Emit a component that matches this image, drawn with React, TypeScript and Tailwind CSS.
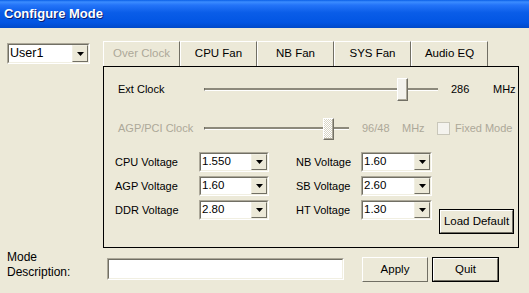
import { FC } from "react";

const font = "font-['Liberation_Sans',Arial,sans-serif]";

const Arrow: FC = () => (
  <div className="w-[16px] h-full flex items-center justify-center bg-[#ECE9D8] border-t border-l border-t-[#F1EFE2] border-l-[#F1EFE2] border-r border-b border-r-[#716F64] border-b-[#716F64]">
    <svg width="7" height="4" viewBox="0 0 7 4">
      <path d="M0 0h7L3.5 4z" fill="#000" />
    </svg>
  </div>
);

const Combo: FC<{ value: string; className: string; text?: string }> = ({ value, className, text = "text-[11.5px]" }) => (
  <div className={`${className} flex border border-t-[#ACA899] border-l-[#ACA899] border-r-white border-b-white`}>
    <div className="flex-1 flex border border-t-[#716F64] border-l-[#716F64] border-r-[#F1EFE2] border-b-[#F1EFE2] bg-white">
      <span className={`flex-1 pl-[1px] flex items-center ${text} text-black`}>{value}</span>
      <Arrow />
    </div>
  </div>
);

const Thumb: FC<{ className: string; disabled?: boolean }> = ({ className, disabled }) => (
  <div
    className={`absolute top-0 ${className} border border-t-white border-l-white border-r-[#716F64] border-b-[#716F64] ${
      disabled
        ? "bg-[repeating-conic-gradient(#ffffff_0_25%,#d8d5c6_0_50%)] bg-[length:2px_2px]"
        : "bg-[#F3F2EC]"
    }`}
  >
    <div className="w-full h-full border-r border-b border-r-[#ACA899] border-b-[#ACA899]" />
  </div>
);

const Track: FC<{ className: string; children: React.ReactNode }> = ({ className, children }) => (
  <div className={`relative ${className} flex items-center`}>
    <div className="w-full h-[3px] bg-[#8C897B] border-b border-white border-l border-l-[#6E6C62]" />
    {children}
  </div>
);

const Btn: FC<{ label: string; className: string; isDefault?: boolean }> = ({ label, className, isDefault }) => (
  <div className={`${className} flex ${isDefault ? "border border-black" : ""}`}>
    <div className="flex-1 flex items-center justify-center border border-t-white border-l-white border-r-[#716F64] border-b-[#716F64] bg-[#ECE9D8] text-[11.5px] text-black">
      {label}
    </div>
  </div>
);

const Tab: FC<{ label: string; disabled?: boolean }> = ({ label, disabled }) => (
  <div
    className={`w-[77px] h-[25px] flex items-center justify-center border-t border-l border-r border-t-white border-l-white border-r-[#716F64] bg-[#ECE9D8] text-[11.5px] ${
      disabled ? "text-[#ACA899]" : "text-black"
    }`}
  >
    {label}
  </div>
);

const VRow: FC<{ label: string; value: string; labelW: string; comboW: string }> = ({ label, value, labelW, comboW }) => (
  <div className="flex items-center h-[20px]">
    <span className={`${labelW} text-[11px] text-black`}>{label}</span>
    <Combo value={value} className={`${comboW} h-[20px]`} />
  </div>
);

export default function App() {
  return (
    <div className={`w-[529px] h-[293px] overflow-hidden bg-[#ECE9D8] flex flex-col ${font}`}>
      <div className="h-[28px] flex items-center pl-[4px] bg-[linear-gradient(180deg,#0A5FE6_0%,#3C8DFF_7%,#2474F8_18%,#0A5DE8_45%,#0255E3_80%,#0049C9_100%)]">
        <span className="text-white font-bold text-[13px] [text-shadow:1px_1px_0_#0A1E70]">Configure Mode</span>
      </div>

      <div className="flex">
        <div className="w-[103px] pl-[7px] pt-[15px]">
          <Combo value="User1" className="w-[83px] h-[21px]" text="text-[12.5px]" />
        </div>
        <div className="w-[416px] pt-[13px] flex flex-col">
          <div className="flex">
            <Tab label="Over Clock" disabled />
            <Tab label="CPU Fan" />
            <Tab label="NB Fan" />
            <Tab label="SYS Fan" />
            <Tab label="Audio EQ" />
          </div>
          <div className="h-[182px] border border-black flex flex-col pt-[11px]">
            <div className="flex items-center h-[23px] pl-[14px] text-[11px]">
              <span className="w-[86px] text-black">Ext Clock</span>
              <Track className="w-[234px] h-[23px]">
                <Thumb className="left-[193px] w-[11px] h-[23px]" />
              </Track>
              <span className="ml-[13px] w-[42px] text-black">286</span>
              <span className="text-black">MHz</span>
            </div>
            <div className="flex items-center h-[23px] mt-[16px] pl-[14px] text-[11px] text-[#ACA899]">
              <span className="w-[86px]">AGP/PCI Clock</span>
              <Track className="w-[145px] h-[22px]">
                <Thumb className="left-[119px] w-[11px] h-[22px]" disabled />
              </Track>
              <span className="ml-[13px] w-[40px]">96/48</span>
              <span className="w-[35px]">MHz</span>
              <div className="w-[13px] h-[13px] border border-[#C9C7BA] bg-[#F4F3EE]" />
              <span className="ml-[5px]">Fixed Mode</span>
            </div>
            <div className="flex items-start mt-[12px] pl-[11px]">
              <div className="flex flex-col gap-[4px]">
                <VRow label="CPU Voltage" value="1.550" labelW="w-[84px]" comboW="w-[70px]" />
                <VRow label="AGP Voltage" value="1.60" labelW="w-[84px]" comboW="w-[70px]" />
                <VRow label="DDR Voltage" value="2.80" labelW="w-[84px]" comboW="w-[70px]" />
              </div>
              <div className="flex flex-col gap-[4px] ml-[27px]">
                <VRow label="NB Voltage" value="1.60" labelW="w-[65px]" comboW="w-[71px]" />
                <VRow label="SB Voltage" value="2.60" labelW="w-[65px]" comboW="w-[71px]" />
                <VRow label="HT Voltage" value="1.30" labelW="w-[65px]" comboW="w-[71px]" />
              </div>
              <Btn label="Load Default" className="ml-[7px] mt-[57px] w-[75px] h-[25px]" isDefault />
            </div>
          </div>
        </div>
      </div>

      <div className="flex items-start mt-[2px]">
        <div className="w-[107px] pl-[7px] text-[12px] leading-[15px] text-black">
          <div>Mode</div>
          <div>Description:</div>
        </div>
        <div className="mt-[8px] w-[237px] h-[22px] flex border border-t-[#ACA899] border-l-[#ACA899] border-r-white border-b-white">
          <div className="flex-1 bg-white border border-t-[#716F64] border-l-[#716F64] border-r-[#F1EFE2] border-b-[#F1EFE2]" />
        </div>
        <Btn label="Apply" className="ml-[18px] mt-[7px] w-[66px] h-[25px]" />
        <Btn label="Quit" className="ml-[4px] mt-[7px] w-[67px] h-[25px]" isDefault />
      </div>
    </div>
  );
}
